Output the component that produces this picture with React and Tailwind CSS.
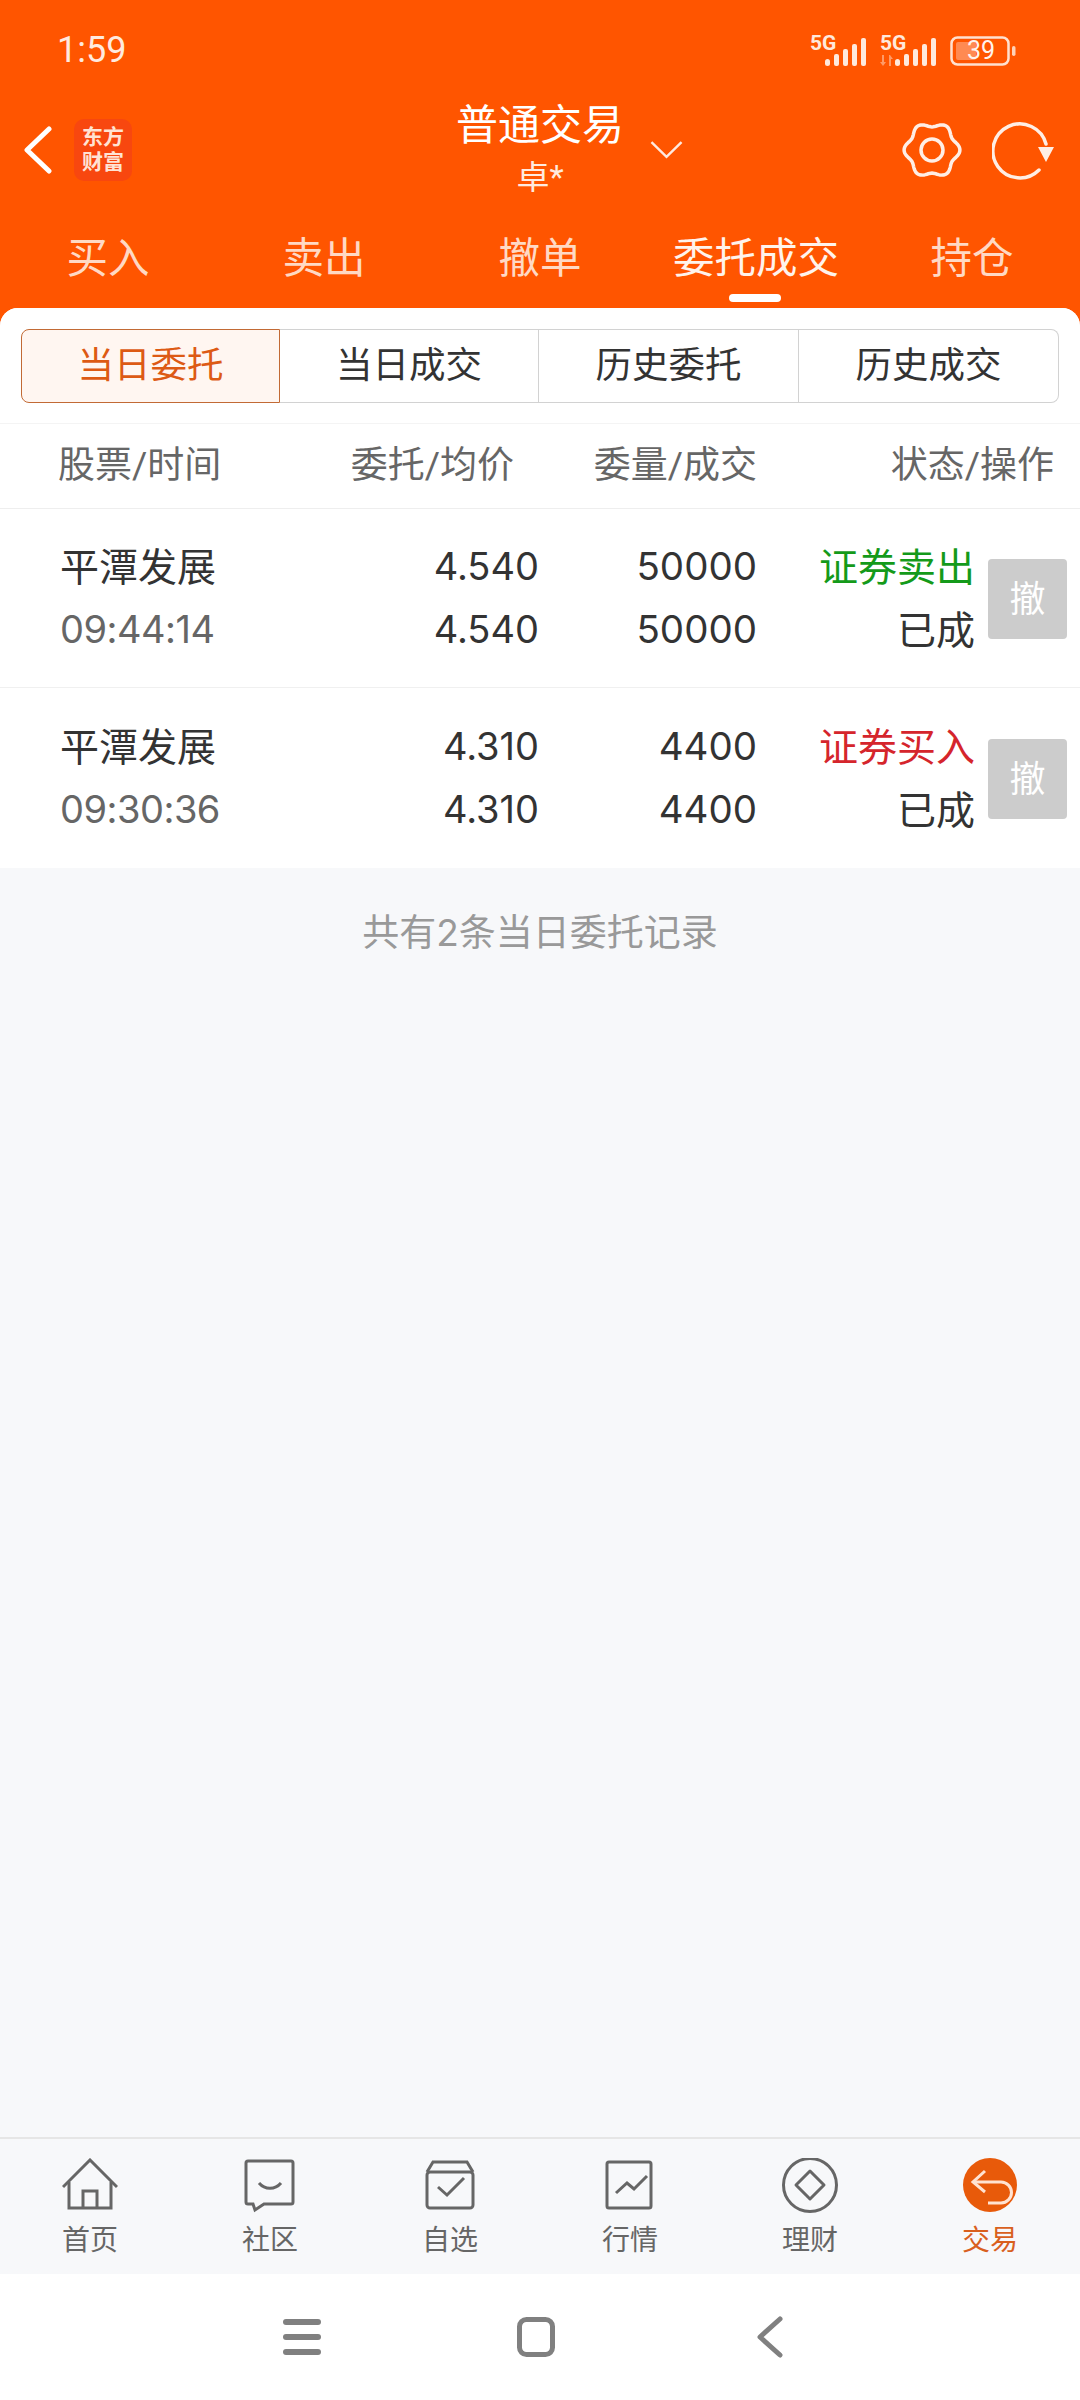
import React from 'react';

const cjk = "font-['Roboto','Noto_Sans_CJK_SC',sans-serif]";
const nums = "font-['Inter','Noto_Sans_CJK_SC',sans-serif]";

const orders = [
  { name: '平潭发展', time: '09:44:14', price: '4.540', qty: '50000', type: '证券卖出', color: 'text-[#149a1a]', height: 'h-[179px] border-b border-[#f0f0f0]' },
  { name: '平潭发展', time: '09:30:36', price: '4.310', qty: '4400', type: '证券买入', color: 'text-[#d5252c]', height: 'h-[180px]' },
];

// six-lobed cog outline, sampled around the circle
const gearPoints = Array.from({ length: 120 }, (_, i) => {
  const a = (i / 120) * Math.PI * 2;
  const r = 25.5 + 2.4 * Math.cos(6 * a);
  return `${(30 + r * Math.cos(a)).toFixed(2)},${(30 + r * Math.sin(a)).toFixed(2)}`;
}).join(' ');

const Signal = ({ arrows }) => (
  <div className="relative w-[58px] h-[32px]">
    <span className="absolute left-0 top-[-4px] text-[21px] leading-[22px] font-bold text-[#ffe9dc] font-['Roboto',sans-serif]">5G</span>
    {arrows && (
      <svg className="absolute left-0 top-[19px]" width="14" height="11" viewBox="0 0 14 11" fill="#ff9a66">
        <path d="M4 0v7H6L3 11 0 7h2V0zM10 0l3 4h-2v7H9V0z" />
      </svg>
    )}
    <svg className="absolute left-[15px] top-[2px]" width="42" height="28" viewBox="0 0 42 28" fill="#ffe9dc">
      <rect x="0" y="21" width="5" height="7" rx="2.5" />
      <rect x="9" y="16" width="5" height="12" rx="2" />
      <rect x="18" y="11" width="5" height="17" rx="2" />
      <rect x="27" y="6" width="5" height="22" rx="2" />
      <rect x="36" y="0" width="5" height="28" rx="2" />
    </svg>
  </div>
);

const Battery = () => (
  <div className="relative w-[66px] h-[30px]">
    <svg className="absolute left-0 top-0" width="66" height="30" viewBox="0 0 66 30" fill="none">
      <rect x="1.5" y="1.5" width="57" height="27" rx="6" stroke="#ffe1d0" strokeWidth="2.5" />
      <rect x="6" y="6" width="20" height="18" rx="2" fill="#ff8a52" />
      <rect x="62" y="10" width="3.5" height="10" rx="1.75" fill="#ffd2b8" />
    </svg>
    <span className="absolute left-[17px] top-0 text-[25px] leading-[30px] text-[#fff3ec] font-['Roboto',sans-serif]">39</span>
  </div>
);

const navItems = [
  {
    label: '首页',
    icon: (
      <>
        <path d="M1 29 28 2l27 27" />
        <path d="M7 24v26h42V24" />
        <path d="M21 50V33h14v17" />
      </>
    ),
  },
  {
    label: '社区',
    icon: (
      <>
        <path d="M6 3h43a2 2 0 0 1 2 2v39a2 2 0 0 1-2 2H22l-9 6-2-6H6a2 2 0 0 1-2-2V5a2 2 0 0 1 2-2z" />
        <path d="M17 25c6 7 16 7 22 0" />
      </>
    ),
  },
  {
    label: '自选',
    icon: (
      <>
        <path d="M5 14 11 4h34l6 10" />
        <rect x="5" y="14" width="46" height="36" rx="3" />
        <path d="M16 29l9 8 17-17" />
      </>
    ),
  },
  {
    label: '行情',
    icon: (
      <>
        <rect x="5" y="4" width="44" height="46" rx="2" />
        <path d="M14 35l11-10 7 6 13-13" />
      </>
    ),
  },
  {
    label: '理财',
    icon: (
      <>
        <circle cx="28" cy="27" r="26.5" />
        <path d="M28 13l14 14-14 14-14-14z" strokeLinejoin="round" />
      </>
    ),
  },
];

const App = () => {
  return (
    <div className={`w-[1080px] h-[2400px] flex flex-col bg-white ${cjk}`}>
      <header className="h-[308px] bg-[#ff5500] text-white shrink-0">
        <div className="h-[96px] flex justify-between pl-[57px] pr-[64px] pt-[30px]">
          <span className="text-[36px] leading-[40px] text-[#ffeadf]">1:59</span>
          <div className="flex items-start gap-[12px] pt-[6px]">
            <Signal />
            <Signal arrows />
            <Battery />
          </div>
        </div>

        <div className="h-[116px] grid grid-cols-[1fr_168px_1fr] items-center">
          <div className="flex items-center pl-[24px] gap-[22px] pb-[8px]">
            <svg width="28" height="48" viewBox="0 0 28 48" fill="none" stroke="#fff" strokeWidth="5" strokeLinecap="round" strokeLinejoin="round">
              <path d="M25 3 3 24l22 21" />
            </svg>
            <div className="w-[58px] h-[62px] rounded-[10px] bg-[#f8470f] flex flex-col items-center justify-center text-[21px] leading-[25px] font-bold text-[#ffe3d4]">
              <span>东方</span>
              <span>财富</span>
            </div>
          </div>
          <div className="flex flex-col items-center pb-[6px]">
            <span className="text-[42px] leading-[54px] whitespace-nowrap">普通交易</span>
            <span className="text-[33px] leading-[50px] text-[#ffeadf]">卓*</span>
          </div>
          <div className="flex items-center justify-between pl-[26px] pr-[24px] pb-[8px]">
            <svg width="33" height="20" viewBox="0 0 34 20" fill="none" stroke="#ffeadf" strokeWidth="2.5">
              <path d="M1.5 2 17 17 32.5 2" />
            </svg>
            <div className="flex items-center gap-[30px]">
              <svg width="60" height="60" viewBox="0 0 60 60" fill="none" stroke="#ffeee5" strokeWidth="3.5" strokeLinejoin="round">
                <polygon points={gearPoints} />
                <circle cx="30" cy="30" r="11" />
              </svg>
              <svg width="64" height="60" viewBox="0 0 64 60" fill="none" stroke="#ffeee5" strokeWidth="3.5" strokeLinecap="round">
                <path d="M47 50A27 27 0 1 1 54 24" />
                <path d="M46 27h16l-8 15z" fill="#ffeee5" stroke="none" />
              </svg>
            </div>
          </div>
        </div>

        <nav className="relative flex">
          {['买入', '卖出', '撤单', '委托成交', '持仓'].map((t, i) => (
            <div key={t} className={`flex-1 text-center text-[41.5px] leading-[56px] pt-[19px] ${i === 3 ? 'text-[#fff3ec]' : 'text-[#ffd9c4]'}`}>
              {t}
            </div>
          ))}
          <div className="absolute left-[729px] top-[82px] w-[52px] h-[8px] rounded-full bg-white" />
        </nav>
      </header>

      <div className="flex-1 bg-[#ff5500] min-h-0">
        <main className="h-full bg-[#f7f8fa] rounded-t-[18px] overflow-hidden">
          <div className="bg-white">
            <div className="h-[116px] pl-[21px] pr-[21px] pt-[21px] border-b border-[#f4f4f4]">
              <div className="flex h-[74px] text-[36.5px] text-[#333]">
                <div className="w-[259px] flex items-center justify-center rounded-l-[8px] border border-[#c26a35] bg-[#fff6f1] text-[#dd5a14]">当日委托</div>
                <div className="w-[259px] flex items-center justify-center border-y border-r border-[#d2d2d2]">当日成交</div>
                <div className="w-[260px] flex items-center justify-center border-y border-r border-[#d2d2d2]">历史委托</div>
                <div className="w-[260px] flex items-center justify-center rounded-r-[8px] border-y border-r border-[#d2d2d2]">历史成交</div>
              </div>
            </div>

            <div className="h-[85px] flex items-center pl-[58px] text-[37px] text-[#666] border-b border-[#eeeeee]">
              <div className="w-[240px]">股票/时间</div>
              <div className="w-[216px] text-right">委托/均价</div>
              <div className="w-[243px] text-right">委量/成交</div>
              <div className="w-[297px] text-right">状态/操作</div>
            </div>

            {orders.map((o) => (
              <div key={o.time} className={`${o.height} flex items-center pl-[60px] pr-[13px] text-[39px] text-[#333] leading-[63px] ${nums}`}>
                <div className="w-[251px]">
                  <div>{o.name}</div>
                  <div className="text-[#666] text-[38px] tracking-[-0.5px]">{o.time}</div>
                </div>
                <div className="w-[228px] text-right text-[38px]">
                  <div>{o.price}</div>
                  <div>{o.price}</div>
                </div>
                <div className="w-[218px] text-right text-[38.5px]">
                  <div>{o.qty}</div>
                  <div>{o.qty}</div>
                </div>
                <div className="w-[218px] text-right">
                  <div className={o.color}>{o.type}</div>
                  <div>已成</div>
                </div>
                <div className="ml-[13px] mt-[2px] w-[79px] h-[80px] rounded-[4px] bg-[#cccccc] text-white flex items-center justify-center text-[36px]">撤</div>
              </div>
            ))}
          </div>

          <div className={`text-center text-[37px] text-[#999] pt-[40px] leading-[50px] ${nums}`}>共有2条当日委托记录</div>
        </main>
      </div>

      <div className="h-[137px] shrink-0 bg-[#f7f8fa] border-t-2 border-[#e6e6e6] grid grid-cols-6">
        {navItems.map((n) => (
          <div key={n.label} className="flex flex-col items-center pt-[19px]">
            <svg width="56" height="56" viewBox="0 0 56 56" fill="none" stroke="#666" strokeWidth="3">
              {n.icon}
            </svg>
            <span className="text-[28px] leading-[44px] mt-[5px] text-[#666]">{n.label}</span>
          </div>
        ))}
        <div className="flex flex-col items-center pt-[19px]">
          <svg width="56" height="56" viewBox="0 0 56 56" fill="none" stroke="#ffe3d2" strokeWidth="3">
            <circle cx="28" cy="27" r="27" fill="#e85a0a" stroke="none" />
            <path d="M23 13 11 24l12 10" />
            <path d="M11 24h28a10.500 10.500 0 0 1 0 21H26" />
          </svg>
          <span className="text-[28px] leading-[44px] mt-[5px] text-[#d9601e]">交易</span>
        </div>
      </div>

      <div className="h-[126px] shrink-0 bg-white flex items-center justify-center pr-[8px]">
        <div className="w-[234px] flex justify-center">
          <svg width="38" height="36" viewBox="0 0 38 36" fill="#808080">
            <rect x="0" y="0" width="38" height="6" rx="3" />
            <rect x="0" y="15" width="38" height="6" rx="3" />
            <rect x="0" y="30" width="38" height="6" rx="3" />
          </svg>
        </div>
        <div className="w-[234px] flex justify-center">
          <svg width="38" height="40" viewBox="0 0 38 40" fill="none" stroke="#808080" strokeWidth="5">
            <rect x="2.500" y="2.500" width="33" height="35" rx="7" />
          </svg>
        </div>
        <div className="w-[234px] flex justify-center">
          <svg width="26" height="42" viewBox="0 0 26 42" fill="none" stroke="#808080" strokeWidth="5" strokeLinecap="round" strokeLinejoin="round">
            <path d="M23 3 3 21l20 18" />
          </svg>
        </div>
      </div>
    </div>
  );
};

export default App;
